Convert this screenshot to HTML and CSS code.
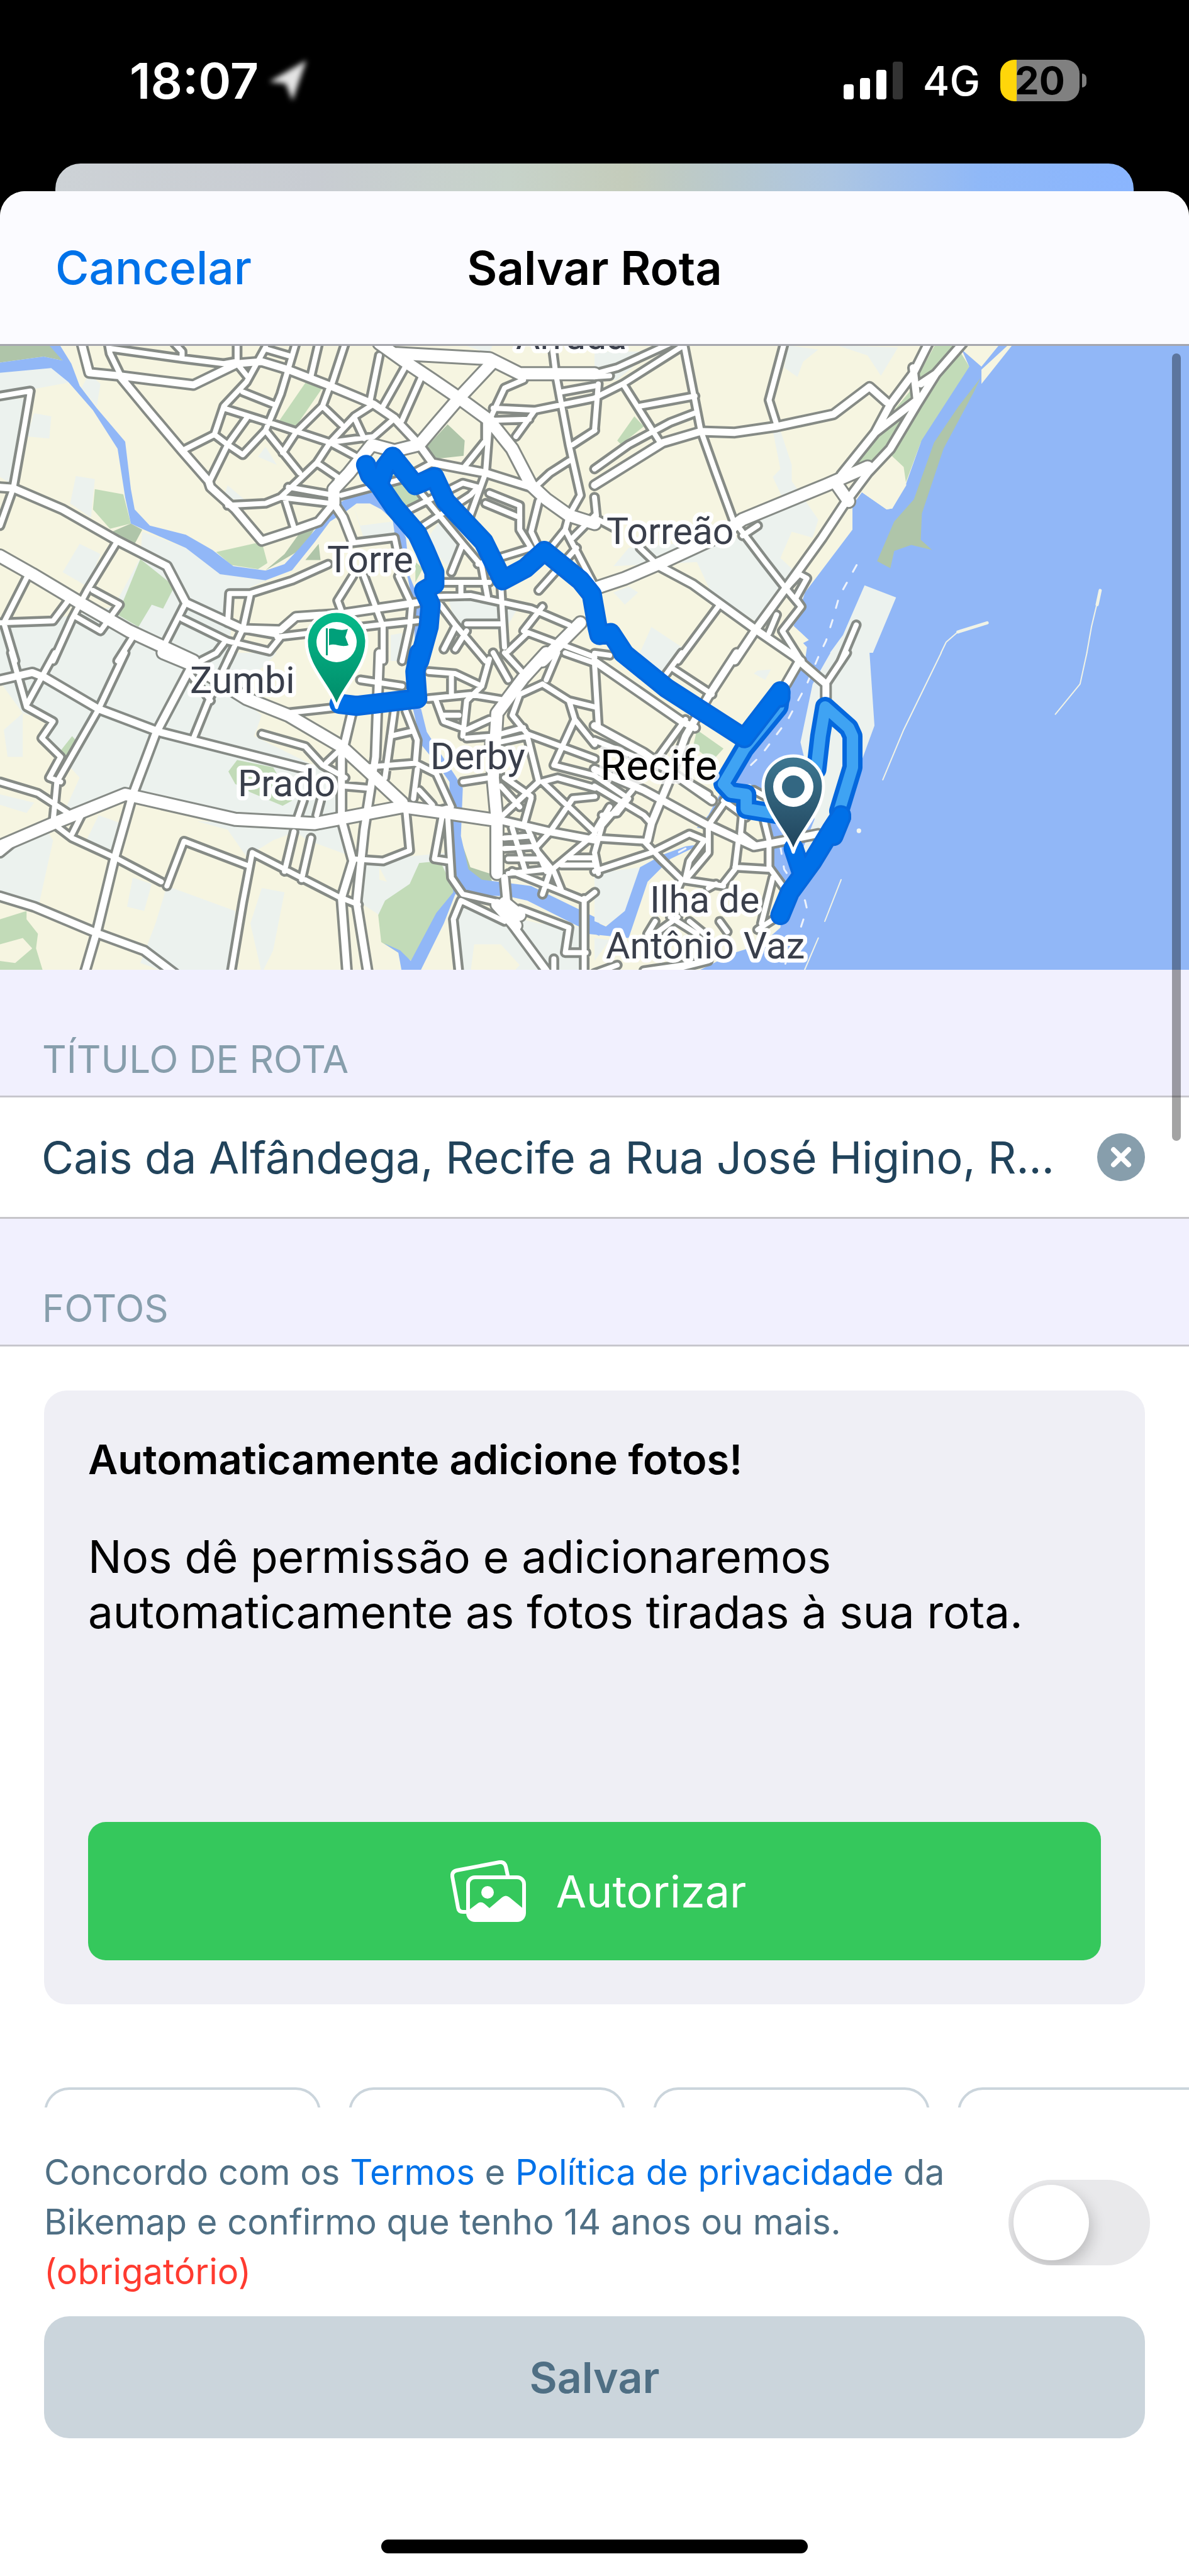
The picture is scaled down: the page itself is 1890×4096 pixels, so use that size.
FILE: index.html
```html
<!DOCTYPE html>
<html lang="pt-BR">
<head>
    <meta charset="UTF-8">
    <meta name="viewport" content="width=device-width, initial-scale=1.0">
    <title>Salvar Rota</title>
    <link rel="stylesheet" href="styles.css">
</head>
<body>
    <div class="status-bar">
        <div class="status-left">
            <span class="clock">18:07</span>
            <svg class="location" viewBox="0 0 66 72" aria-hidden="true"><path d="M62 4 L3 38 L29 41 L40 68 Z"/></svg>
        </div>
        <div class="status-right">
            <svg class="signal" viewBox="0 0 94 60" aria-hidden="true">
                <rect x="0" y="36" width="16" height="24" rx="4"/>
                <rect x="26" y="26" width="16" height="34" rx="4"/>
                <rect x="52" y="13" width="16" height="47" rx="4"/>
                <rect class="off" x="78" y="0" width="16" height="60" rx="4"/>
            </svg>
            <span class="network">4G</span>
            <span class="battery"><span class="battery-level">20</span></span>
        </div>
    </div>
    <div class="behind"></div>

    <div class="sheet">
        <header>
            <button type="button" class="cancel">Cancelar</button>
            <h1>Salvar Rota</h1>
        </header>

        <main>
            <svg class="map" viewBox="0 0 1890 992" role="img" aria-label="Mapa da rota">
                <defs>
                    <linearGradient id="green" x1="0" y1="0" x2="0" y2="1">
                        <stop offset="0" stop-color="#06bb8b"/><stop offset="1" stop-color="#008a68"/>
                    </linearGradient>
                    <linearGradient id="slate" x1="0" y1="0" x2="0" y2="1">
                        <stop offset="0" stop-color="#3e7892"/><stop offset="1" stop-color="#1f425a"/>
                    </linearGradient>

                    <!-- streets, drawn twice: casing first, then the white on top -->
                    <g id="streets">
                        <g transform="translate(0 -4) scale(.603 .322)">
                            <path class="wide" d="M0 1050 L85 1140 L210 1280 L340 1420 L510 1568 M1000 0 L1060 80 L1140 180 L1210 270 L1290 380 L1350 520 L1400 700 L1440 770 L1500 850 L1568 890 M1040 50 L1290 75 L1370 150 L1568 150 M1300 90 L1210 270 L1150 400 L1105 500 L1040 530 L980 500 L920 640 L880 720 L880 790 M1530 1380 L1430 1568"/>
                            <path class="main" d="M0 710 L35 715 L165 820 L310 975 L440 1100 L490 1280 L640 1410 L740 1415 L780 1350 L900 1335 L1100 1280 M215 0 L235 145 L315 160 L400 180 L510 205 L625 100 L690 90 L760 130 L870 210 L985 300 L1040 370 L1105 500 L1140 590 L1280 640 L1400 710 M315 160 L390 330 L480 530 L550 680 L555 710 L620 820 L690 975 L780 920 L840 880 L880 790 L905 860 L930 980"/>
                            <path class="minor" d="M285 0 L290 50 L320 165 M290 25 L480 75 L590 100 L620 90 M460 0 L480 40 L480 70 M780 0 L740 250 L700 430 L790 640 M700 20 L650 190 L590 310 L565 450 L480 530 M625 0 L625 100 L655 170 M705 30 L760 60 M590 320 L700 385 L870 490 L950 570 M640 240 L720 300 M565 450 L600 500 L550 690 M650 370 L600 500 L640 550 L700 430 M850 310 L900 400 M870 210 L850 310 L780 440 L745 540 M840 0 L820 160 M910 0 L875 200 M1000 60 L975 290 M1070 110 L1010 310 M1110 170 L1060 380 M865 490 L985 460 L1040 370 M935 370 L960 470 M985 300 L935 360 L870 490 L835 590 L740 760 L700 790 L600 800 M835 590 L890 660 L880 790 M760 710 L880 750 M740 760 L870 790 M750 760 L775 910 M930 985 L1040 960 L1050 1050 M1140 590 L1060 670 L900 750 M1280 390 L1280 480 L1220 620 M1290 400 L1280 640 L1230 900 M1290 380 L1330 220 L1380 180 M1300 320 L1410 330 L1568 270 M1300 380 L1395 375 M1410 330 L1360 460 M1455 0 L1465 150 L1500 500 L1530 750 L1500 850 M1510 500 L1568 430 M1500 580 L1450 640 L1410 710 M1480 240 L1568 210 M1290 740 L1370 800 L1370 920 L1400 1010 L1260 1090 M1280 790 L1370 860 M1420 780 L1400 930 L1430 1050 M1500 850 L1490 920 L1430 1060 M1490 920 L1568 1200 M1568 850 L1510 960 M1080 820 L1220 690 L1260 710 L1240 750 L1100 920 M1110 740 L1220 990 L1190 1130 M1220 990 L1270 1100 L1285 1250 M1520 1010 L1420 1220 M1160 1180 L1290 1180 M1150 1250 L1240 1245 L1400 1310 L1500 1390 M1215 1180 L1215 1240 M1320 1190 L1330 1500 M1160 1290 L1200 1390 L1280 1568 M1230 1385 L1320 1385 M1200 1400 L1170 1510 M1230 1420 L1200 1510 M1430 1300 L1380 1420 L1480 1490 M1390 1430 L1340 1520 M1470 1480 L1568 1550 M865 1090 L770 1170 L660 1235 L605 1235 L600 1380 M490 1280 L430 1500 M480 1360 L600 1470 L710 1520 M660 1240 L640 1410 L600 1568 M730 1450 L1000 1390 L1100 1370 M740 1450 L710 1520 M640 1410 L730 1440 M590 1480 L570 1530 L530 1568 M960 1150 L1010 1400 L1010 1568 M1050 1150 L1085 1290 L1080 1400 L1060 1568 M930 1150 L890 1270 L900 1320 M310 975 L230 1220 L190 1360 L140 1568 M245 1220 L315 1290 L265 1420 L200 1350 M350 1450 L310 1568 M75 1140 L10 1380 L40 1568 M0 1380 L140 1370 L180 1270 M0 260 L80 235 L65 400 L35 715 L0 900"/>
                        </g>
                        <g transform="translate(945 -4) scale(.603 .322)">
                            <path class="wide" d="M720 610 L610 700 L390 870 L330 950 L180 1080 L80 1160 L0 1210 M640 700 L670 780"/>
                            <path class="main" d="M880 0 L840 150 L780 300 L740 440 L650 650 M970 0 L900 150 L850 300 L780 520 L720 640 L660 790 L600 960 L500 1220 L430 1400 L370 1568 M170 1100 L260 1190 L430 1420 L545 1568 M0 700 L180 490 L280 435 L370 440 L480 410 L630 350 L725 215 L770 290 M840 120 L850 280 L740 440 M860 200 L900 150"/>
                            <path class="minor" d="M235 0 L280 430 L320 640 L365 870 L450 1080 L500 1200 L545 1300 L495 1420 L545 1568 M500 1220 L540 1140 L560 1160 L530 1260 L545 1300 M480 1340 L460 1430 M500 0 L460 280 L480 400 M0 620 L90 500 L200 390 L270 340 M120 310 L265 260 M75 200 L170 480 M0 270 L75 200 L235 10 M0 150 L60 120 L200 0 M0 165 L40 160 M120 1010 L170 1100 M330 1290 L220 1568 M690 1390 L650 1568 M0 860 L50 910 M0 1530 L40 1540 M390 950 L430 900 M0 430 L10 200 M0 760 L5 850"/>
                        </g>
                        <g transform="translate(0 488) scale(.603 .331)">
                            <path class="wide" d="M430 0 L510 60 L650 220 L760 300 L900 450 L960 550 L1060 720 M0 930 L140 820 L330 680 L620 800 L830 820 L1060 740 L1180 770 L1310 805 M1440 0 L1380 120 L1310 290 L1300 600 L1310 800 L1310 1060 M1310 1210 L1360 1310 M1330 1200 L1370 1260"/>
                            <path class="main" d="M500 80 L410 390 L350 680 L300 1000 L255 1340 L225 1527 M0 130 L85 95 L120 120 L260 270 L420 380 L810 560 M0 1170 L90 1220 L260 1350 L380 1430 L460 1540 M930 270 L900 500 L900 800 L930 1000 L900 1180 L915 1540 M1000 0 L990 500 L960 850 L940 1200 L970 1540 M0 960 L40 900 M1310 800 L1450 860 L1568 900 M1330 1080 L1340 1280 L1440 1527"/>
                            <path class="minor" d="M30 0 L70 260 L140 330 L110 410 L160 500 L130 600 L160 620 M145 0 L70 250 M330 0 L260 270 L150 620 L140 810 M610 0 L550 230 L510 410 M500 100 L555 230 M0 620 L100 675 L180 770 M215 780 L190 870 M140 820 L190 890 L310 990 L425 1100 M440 1120 L485 905 L650 1020 M665 960 L890 1170 L945 1210 M665 960 L640 1200 L610 1527 M775 860 L750 1050 M820 890 L795 1090 M690 390 L805 450 L850 540 L910 600 M800 710 L785 790 M845 710 L835 780 M750 290 L900 260 M860 530 L900 460 M1040 270 L1015 600 M1070 280 L1100 420 L1095 530 L960 550 M1095 530 L1150 580 L1190 740 L1150 760 M1030 400 L1090 375 M950 130 L1060 160 M905 640 L970 650 M1100 560 L1090 700 M1105 660 L1140 730 M1070 760 L1080 950 L1010 1000 L930 990 M1165 790 L1145 990 L1180 1000 M1180 780 L1190 1080 L1220 1160 L1340 1210 M1130 90 L1200 100 L1270 160 L1230 230 L1220 400 M1190 110 L1190 200 M1130 220 L1240 200 L1340 230 M1270 160 L1290 30 M1300 0 L1340 130 M1330 0 L1380 100 M1430 150 L1370 200 L1350 300 L1390 390 L1568 510 M1430 150 L1500 230 L1568 260 M1490 0 L1568 50 M1440 130 L1470 0 M1150 230 L1170 330 L1230 370 L1290 320 M1170 300 L1210 300 M1230 410 L1300 400 L1380 360 M1290 440 L1390 400 M1500 230 L1515 320 L1460 540 L1568 590 M1515 320 L1568 440 M1390 400 L1420 620 L1320 790 M1430 620 L1568 860 M1430 620 L1470 600 L1568 650 M1568 690 L1510 700 L1450 860 M1400 700 L1380 830 M1320 640 L1370 740 M1330 600 L1400 690 M1330 890 L1400 880 M1330 940 L1410 930 M1340 990 L1430 990 M1350 840 L1385 1050 M1390 840 L1440 1050 M1340 1060 L1440 1040 M1450 860 L1410 940 L1460 1050 L1480 1140 M1568 870 L1450 1050 L1430 1160 M1220 620 L1290 600 M1500 985 L1568 985 M1480 1020 L1568 1020 M1210 1540 L1195 1280 L1215 1190 L1330 1290 M1370 1230 L1500 1320 L1490 1440 L1545 1440 M1540 1180 L1540 1527 M1350 1050 L1540 1190 L1568 1150 M1460 1470 L1460 1540"/>
                        </g>
                        <g transform="translate(945 488) scale(.603 .331)">
                            <path class="main" d="M0 40 L230 330 L265 360 M0 560 L130 660 L300 830 L420 930 L480 910 L590 870 M375 0 L300 210 L240 400 L200 600 L150 820 L140 900 M540 40 L610 150 L610 220 M520 0 L540 40 L505 150 M0 350 L130 480 L310 710"/>
                            <path class="minor" d="M240 320 L160 520 M230 0 L190 100 M210 80 L310 200 M665 0 L610 150 M0 640 L130 780 L150 820 M0 50 L10 350 M0 420 L190 560 L300 680 M100 660 L20 830 L0 960 L10 1050 M0 590 L90 700 L60 770 M350 700 L300 830 L300 960 L240 1090 M390 770 L385 870 L430 930 M340 710 L400 790 M445 790 L460 900 L460 1030 L500 1130 M310 830 L380 890 L370 1040 L340 1110 M370 1030 L460 1040 M470 1080 L440 1300 M0 890 L130 905 L180 1000 L230 1090 L340 1120 M0 1050 L150 960 L250 870 L290 900 L250 1000 L240 1080 M20 780 L60 770 M40 740 L0 860 M230 1090 L220 1130 M320 1110 L300 1130 M160 1290 L140 1350 M220 1270 L160 1350 M250 1290 L290 1350 M200 1270 L270 1350 M0 1540 L60 1500 M130 1527 L270 1490 M350 1340 L330 1290 M170 1540 L300 1480 M0 1000 L10 1060 M480 1270 L430 1330 M420 660 L450 690"/>
                        </g>
                    </g>

                    <g id="route-main">
                        <g transform="translate(0 -4) scale(.603 .322)">
                            <path d="M965 600 L975 650 L1000 700 L1040 810 L1100 940 L1120 1020 L1145 1130 L1145 1190 L1118 1220 L1135 1290 L1130 1400 L1105 1568 M1000 690 L1015 610 L1035 560 L1095 700 L1145 660 L1175 780 L1275 980 L1325 1170 L1385 1110 L1435 1025 L1530 1170 L1560 1240 L1575 1400 L1580 1440 L1610 1430 L1645 1530"/>
                        </g>
                        <g transform="translate(0 488) scale(.603 .331)">
                            <path d="M1105 0 L1095 90 L1100 220 L940 255 L895 245"/>
                        </g>
                        <g transform="translate(945 488) scale(.603 .331)">
                            <path d="M75 0 L190 170 L395 410 L490 185 L490 215 M650 790 L630 880 M650 780 L625 850 L575 1000 L515 1150 L490 1260 M525 940 L545 1050"/>
                        </g>
                    </g>
                    <g id="route-light" transform="translate(945 488) scale(.603 .331)">
                        <path d="M490 190 L485 260 L395 460 L340 630 L360 670 L400 680 L400 750 L500 780 M585 560 L595 400 L608 260 L670 360 L680 400 L680 550 L645 760 L650 790"/>
                    </g>
                </defs>

                <rect class="land" width="1890" height="992"/>

                <!-- upper left -->
                <g transform="translate(0 -4) scale(.603 .322)">
                    <path class="built" d="M0 145 L135 122 L190 190 L90 225 L0 250 Z M0 280 L65 270 L35 700 L0 660 Z M235 150 L265 200 L255 310 L215 220 Z M90 345 L135 360 L130 470 L70 460 Z M200 655 L250 670 L240 860 L185 790 Z M210 990 L265 1040 L230 1200 L165 1130 Z M375 930 L490 1010 L580 1140 L700 1170 L620 1240 L600 1568 L0 1568 L0 1390 L140 1360 L300 1300 L370 1060 Z M700 510 L730 600 L680 560 Z M600 700 L650 780 L590 760 Z M930 790 L950 900 L1035 880 L1040 950 L960 970 Z M1170 850 L1230 1000 L1200 1140 L1120 980 Z M1180 1250 L1370 1290 L1330 1420 L1200 1380 Z M1210 0 L1300 0 L1290 50 Z M1030 1440 L1060 1430 L1050 1568 L1030 1568 Z"/>
                    <path class="park" d="M805 195 L850 220 L780 410 L735 385 Z M250 720 L325 745 L345 890 L290 915 L245 820 Z M570 1030 L690 980 L705 1085 L680 1115 L610 1095 Z M370 1065 L460 1200 L430 1310 L400 1290 L365 1400 L310 1340 Z M1040 640 L1110 770 L1070 810 L1025 680 Z M1095 1080 L1115 1110 L1095 1180 Z"/>
                    <path class="forest" d="M0 0 L130 0 L165 85 L115 65 L0 95 Z M1180 400 L1225 480 L1222 555 L1150 570 L1125 510 Z M295 930 L345 890 L375 920 L355 990 Z M840 880 L800 1010 L700 1120 L750 1040 L800 910 Z M840 990 L845 1070 L805 1070 Z"/>
                    <path class="water" d="M0 95 L115 65 L165 85 L125 0 L155 0 L188 100 L210 210 L255 320 L330 485 L345 720 L355 820 L395 900 L490 945 L560 1020 L615 1100 L700 1122 L750 1090 L790 1010 L840 900 L880 800 L945 740 L1000 735 L1045 860 L1070 960 L1080 1150 L1110 1290 L1115 1568 L1095 1568 L1090 1290 L1075 1160 L1045 1000 L1035 870 L1005 820 L975 790 L940 790 L915 825 L870 880 L830 980 L770 1120 L700 1170 L580 1140 L490 1010 L380 920 L345 890 L330 760 L310 520 L245 330 L180 190 L135 122 L0 145 Z"/>
                </g>

                <!-- upper right, coast -->
                <g transform="translate(945 -4) scale(.603 .322)">
                    <path class="built" d="M510 10 L590 30 L550 90 L535 165 L500 120 Z M640 10 L800 20 L755 160 L720 60 Z M0 40 L150 40 L60 180 L0 180 Z M470 430 L490 430 L520 600 L520 680 L590 870 L575 960 L520 930 L490 1060 L530 1130 L430 1380 L310 1240 L270 1080 L50 1100 L90 1010 L380 960 L500 780 L470 660 L490 620 Z M50 1230 L90 1200 L115 1230 L80 1290 Z M150 1400 L230 1500 L210 1568 L110 1568 Z"/>
                    <path class="park" d="M900 0 L950 0 L990 120 L860 490 L820 690 L780 540 L700 600 L680 600 L740 440 L830 240 Z M105 360 L130 410 L70 500 L60 480 Z"/>
                    <path class="water" d="M1070 0 L1568 0 L1568 1568 L555 1568 L560 1500 L550 1480 L565 1465 L525 1395 L555 1230 L680 920 L680 800 L705 735 L770 820 L785 815 L822 690 L862 480 L988 115 L968 30 L1020 115 Z"/>
                    <path class="land" d="M1095 0 L1105 0 L1020 200 L1020 130 Z M770 820 L785 815 L822 700 L815 610 L775 540 L705 735 Z"/>
                    <path class="forest" d="M1018 170 L1000 240 L920 520 L863 840 L860 970 L890 1020 L835 995 L790 1025 L780 1110 L745 1075 L790 880 L842 770 L895 490 L960 310 Z"/>
                    <path class="built" d="M712 1195 L795 1255 L725 1568 L605 1568 L655 1440 Z"/>
                    <path class="pier thin" d="M958 1425 L927 1475 L900 1580 M1333 1220 L1310 1400 L1293 1580"/>
                    <path class="pier" d="M1035 1380 L958 1425 M1333 1220 L1325 1290"/>
                    <path class="ferry" d="M691 1095 L645 1250 L627 1370 L610 1470 L585 1568"/>
                </g>

                <!-- lower left -->
                <g transform="translate(0 488) scale(.603 .331)">
                    <path class="built" d="M0 0 L730 0 L620 200 L690 300 L670 400 L870 580 L890 700 L890 780 L620 790 L330 680 L170 760 L210 600 L160 500 L110 400 L130 330 L60 290 L0 140 Z M60 290 L60 500 L20 500 L10 370 Z M260 780 L320 820 L290 980 L220 930 Z M0 680 L90 720 L70 770 L0 730 Z M120 840 L140 900 L100 1230 L0 1160 L0 950 Z M520 810 L890 830 L930 980 L810 900 L780 860 L720 900 L650 980 L600 850 Z M440 1120 L620 1240 L610 1540 L450 1540 L370 1490 L410 1300 Z M690 1130 L750 1150 L720 1430 L690 1540 L660 1300 Z M350 1080 L400 1110 L380 1240 L335 1220 Z M960 1000 L1180 960 L1190 1100 L1000 1260 L950 1200 Z M1200 1200 L1420 1300 L1540 1320 L1540 1540 L1200 1540 Z"/>
                    <path class="land" d="M1250 1400 L1320 1400 L1370 1500 L1350 1540 L1240 1540 Z M1000 1030 L1020 1100 L1000 1090 Z"/>
                    <path class="park" d="M190 400 L200 420 L170 510 L160 470 Z M625 515 L720 550 L770 710 L745 735 L660 670 L620 630 L602 570 Z M0 1280 L70 1240 L70 1280 L100 1350 L95 1420 L115 1540 L0 1540 Z M1105 1010 L1160 1000 L1200 1150 L1085 1480 L1005 1390 L997 1260 L1015 1190 L1080 1110 Z"/>
                    <path class="forest" d="M1215 900 L1240 1030 L1290 1060 L1300 1115 L1240 1090 Z"/>
                    <path class="land" d="M0 1400 L60 1370 L85 1420 L40 1490 L0 1480 Z"/>
                    <path class="water" d="M1085 240 L1110 270 L1125 380 L1160 480 L1200 590 L1220 650 L1215 880 L1235 1040 L1270 1090 L1400 1120 L1580 1280 L1580 1360 L1520 1310 L1390 1190 L1340 1170 L1200 1160 L1170 1300 L1105 1540 L1060 1540 L1050 1440 L1012 1395 L1055 1430 L1083 1480 L1150 1250 L1195 1150 L1185 1000 L1185 620 L1150 530 L1110 440 Z"/>
                </g>

                <!-- lower right -->
                <g transform="translate(945 488) scale(.603 .331)">
                    <path class="built" d="M75 0 L215 0 L190 150 L120 70 Z M430 85 L465 80 L450 130 L420 100 Z M0 1060 L120 1030 L80 1250 L30 1310 L0 1290 Z M0 1370 L40 1380 L0 1480 Z"/>
                    <path class="park" d="M270 370 L340 460 L310 520 L260 450 Z"/>
                    <path class="water" d="M560 0 L550 60 L500 200 L390 450 L330 650 L372 640 L410 630 L450 700 L460 900 L470 1030 L500 1130 L490 1320 L440 1400 L370 1440 L260 1540 L1568 1540 L1568 0 Z M330 680 L300 780 L270 840 L300 850 L340 720 Z M240 930 L180 970 L120 1030 L80 1240 L30 1315 L0 1290 L-20 1280 L-20 1350 L90 1370 L140 1100 L200 990 L280 920 Z"/>
                    <path class="built" d="M622 0 L575 150 L543 430 L560 560 L580 800 L545 960 L560 1000 L620 820 L680 640 L738 350 L725 0 Z"/>
                    <path class="pier thin" d="M914 0 L815 370 L760 610 M1298 0 L1280 150 L1215 295 M650 1090 L607 1290 M590 1370 L553 1527"/>
                    <path class="ferry" d="M590 20 L560 150 L510 320 L440 490 L395 570 M490 930 L500 1040 L555 1190 L560 1230 L540 1340 L495 1527 M330 700 L310 790 M240 940 L200 980"/>
                    <ellipse class="speck" cx="697" cy="855" rx="6" ry="11"/>
                </g>

                <use href="#streets" class="casing"/>
                <use href="#streets" class="surface"/>

                <use href="#route-light" class="route-edge"/>
                <use href="#route-light" class="route-glow"/>
                <use href="#route-main" class="route-edge"/>
                <use href="#route-main" class="route-fill"/>

                <g class="labels">
                    <text x="820" y="5">Arruda</text>
                    <text x="520" y="360">Torre</text>
                    <text x="964" y="315">Torreão</text>
                    <text x="302" y="552">Zumbi</text>
                    <text x="378" y="716">Prado</text>
                    <text x="684" y="673">Derby</text>
                    <text x="1033" y="901">Ilha de</text>
                    <text x="963" y="974">Antônio Vaz</text>
                    <text class="city" x="954" y="690">Recife</text>
                </g>

                <g transform="translate(535 577)">
                    <path class="pin" fill="url(#green)" d="M0 -2 C-10 -36 -48 -66 -48 -107 A48 48 0 0 1 48 -107 C48 -66 10 -36 0 -2 Z"/>
                    <circle class="pin-hole" cy="-106" r="32"/>
                    <path fill="#00a07a" d="M-17 -128 h3 v43 h-3 Z M-12 -127 C-4 -130 4 -122 18 -127 L14 -114 L19 -101 C6 -97 -2 -105 -12 -101 Z"/>
                </g>
                <g transform="translate(1261 807)">
                    <path class="pin" fill="url(#slate)" d="M0 -2 C-10 -36 -48 -66 -48 -107 A48 48 0 0 1 48 -107 C48 -66 10 -36 0 -2 Z"/>
                    <circle class="pin-hole" cy="-106" r="32"/>
                    <circle fill="#336782" cy="-106" r="18"/>
                </g>
            </svg>

            <h2><label for="route-title">TÍTULO DE ROTA</label></h2>
            <div class="title-row">
                <input id="route-title" type="text" value="Cais da Alfândega, Recife a Rua José Higino, R...">
                <button type="button" class="clear" aria-label="Limpar">
                    <svg viewBox="0 0 76 76"><path d="M26 26 L50 50 M50 26 L26 50"/></svg>
                </button>
            </div>

            <h2>FOTOS</h2>
            <section class="photos">
                <div class="card">
                    <h3>Automaticamente adicione fotos!</h3>
                    <p>Nos dê permissão e adicionaremos automaticamente as fotos tiradas à sua rota.</p>
                    <button type="button" class="authorize">
                        <svg viewBox="0 0 120 98" aria-hidden="true">
                            <path class="line" d="M24 82 H20 Q13 82 12 75 L3 26 Q2 18 10 16 L78 3 Q86 2 88 10 L91 24"/>
                            <rect class="line" x="28" y="27" width="89" height="68" rx="11"/>
                            <circle cx="59" cy="51" r="10"/>
                            <path d="M28 80 L44 68 Q49 65 54 69 L62 76 L82 59 Q88 54 94 59 L117 78 V86 Q117 95 107 95 H38 Q28 95 28 86 Z"/>
                        </svg>
                        <span>Autorizar</span>
                    </button>
                </div>
                <div class="slots">
                    <div class="slot"></div>
                    <div class="slot"></div>
                    <div class="slot"></div>
                    <div class="slot"></div>
                </div>
            </section>
            <div class="scrollbar"></div>
        </main>

        <footer>
            <div class="consent">
                <label for="agree">Concordo com os <a href="#">Termos</a> e <a href="#">Política de privacidade</a> da Bikemap e confirmo que tenho 14 anos ou mais. <span class="required">(obrigatório)</span></label>
                <input id="agree" type="checkbox" role="switch">
            </div>
            <button type="button" class="save">Salvar</button>
            <div class="home-bar"></div>
        </footer>
    </div>
</body>
</html>
```
FILE: styles.css
```css
* { box-sizing: border-box; }
body { margin: 0; min-height: 100vh; display: flex; flex-direction: column; background: #000; font-family: Inter, "Liberation Sans", sans-serif; }
button, input { font-family: inherit; border: 0; margin: 0; padding: 0; }
h1, h2, h3, p { margin: 0; }

/* status bar */
.status-bar { height: 260px; padding: 0 174px 4px 206px; display: flex; align-items: center; justify-content: space-between; color: #fff; }
.status-left, .status-right { display: flex; align-items: center; }
.status-left { gap: 14px; }
.clock { font-size: 79px; font-weight: 600; }
.location { width: 66px; fill: #e4e4e4; filter: blur(4px); }
.signal { width: 94px; fill: #fff; }
.signal .off { fill: #333; }
.network { margin: 0 32px; font-size: 65px; font-weight: 500; }
.battery { position: relative; width: 126px; height: 66px; border-radius: 22px; background: linear-gradient(90deg, #ffd60a 26px, #808080 26px); }
.battery::after { content: ""; position: absolute; left: 130px; top: 22px; width: 7px; height: 22px; border-radius: 0 8px 8px 0; background: #808080; }
.battery-level { display: block; line-height: 66px; text-align: center; color: #000; font-size: 61px; font-weight: 700; }

.behind { height: 44px; margin: 0 88px; border-radius: 40px 40px 0 0; background: linear-gradient(90deg, #cdd2d6, #c8ccd2 24%, #c7d3ca 42%, #c4ccbb 53%, #adc6e2 72%, #8fb8f8 86%, #8ab5fe); }

/* sheet */
.sheet { flex: 1; display: flex; flex-direction: column; background: #fff; border-radius: 40px 40px 0 0; overflow: hidden; }
header { height: 246px; padding: 0 88px; display: grid; grid-template-columns: 1fr auto 1fr; align-items: center; background: #fbfbff; border-bottom: 3px solid #a5a6ad; }
.cancel { justify-self: start; background: none; color: #0072e9; font-size: 73px; font-weight: 500; }
h1 { font-size: 74px; font-weight: 600; }

main { position: relative; }
.scrollbar { position: absolute; top: 12px; right: 13px; width: 14px; height: 1252px; border-radius: 7px; background: rgba(0, 0, 0, .36); }

/* map */
.map { display: block; width: 100%; }
.map path { stroke-linecap: round; stroke-linejoin: round; vector-effect: non-scaling-stroke; }
.land { fill: #f6f5e1; }
.built { fill: #ecf2ee; }
.park { fill: #c2dbb8; }
.forest { fill: #afc5a9; }
.water { fill: #91b7f7; }
.speck { fill: #f4f6ef; }
.pier { fill: none; stroke: #f1f3e6; stroke-width: 5px; }
.pier.thin { stroke-width: 2px; }
.ferry { fill: none; stroke: #eef3fb; stroke-width: 3px; stroke-dasharray: 12 20; }
.casing { fill: none; stroke: #868b86; --wide: 24px; --main: 19px; --minor: 17px; }
.surface { fill: none; stroke: #fff; --wide: 18px; --main: 11px; --minor: 8px; }
.wide { stroke-width: var(--wide); }
.main { stroke-width: var(--main); }
.minor { stroke-width: var(--minor); }
.route-edge, .route-fill, .route-glow { fill: none; }
.route-edge { stroke: #0568dd; stroke-width: 32px; }
.route-fill { stroke: #0070e8; stroke-width: 24px; }
.route-glow { stroke: #3fa3f3; stroke-width: 18px; }
.labels { font-family: Roboto, sans-serif; font-size: 59px; fill: #3a3f4b; stroke: #fff; stroke-width: 13px; stroke-linejoin: round; paint-order: stroke; }
.city { font-size: 67px; fill: #000; stroke: rgba(255, 255, 255, .8); }
.pin { stroke: #fff; stroke-width: 5px; }
.pin-hole { fill: #fff; }

/* form */
h2 { height: 203px; padding: 0 67px 20px; display: flex; align-items: flex-end; background: #f1f0fe; border-bottom: 3px solid #c8c7ce; color: #879eac; font-size: 60px; font-weight: 400; line-height: 76px; }
.title-row { display: flex; align-items: center; height: 193px; padding: 0 70px 0 66px; border-bottom: 3px solid #c6c5ca; }
.title-row input { flex: 1; min-width: 0; height: 100px; background: none; color: #21435b; font-size: 70px; text-overflow: ellipsis; outline: 0; }
.clear { width: 76px; height: 76px; border-radius: 50%; background: #879eac; }
.clear svg { display: block; fill: none; stroke: #fff; stroke-width: 8px; stroke-linecap: round; }

.photos { padding: 70px 0 0 70px; }
.card { height: 976px; margin-right: 70px; padding: 70px; border-radius: 36px; background: #efeff5; display: flex; flex-direction: column; }
h3 { font-size: 65px; font-weight: 600; line-height: 80px; }
.card p { margin-top: 70px; font-size: 71px; line-height: 88px; }
.authorize { margin-top: auto; height: 220px; padding-left: 12px; border-radius: 28px; background: #35c85c; color: #fff; font-size: 70px; display: flex; align-items: center; justify-content: center; gap: 48px; }
.authorize svg { width: 120px; fill: #fff; }
.authorize .line { fill: none; stroke: #fff; stroke-width: 6px; stroke-linecap: round; }
.slots { display: flex; gap: 44px; height: 32px; margin-top: 132px; overflow: hidden; }
.slot { flex: 0 0 440px; height: 320px; border: 4px solid #cbd5dc; border-radius: 40px; }

/* footer */
footer { flex: 1; display: flex; flex-direction: column; padding: 64px 70px 36px; }
.consent { display: flex; align-items: center; justify-content: space-between; color: #4f6f84; font-size: 56px; line-height: 79px; margin-right: -8px; }
.consent label { width: 1460px; }
.consent a { color: #0072e9; text-decoration: none; }
.required { color: #ff3b30; }
#agree { appearance: none; width: 225px; height: 136px; border-radius: 68px; background: #e9e9eb; padding: 8px; overflow: hidden; }
#agree::before { content: ""; display: block; width: 120px; height: 120px; border-radius: 50%; background: #fff; box-shadow: 4px 10px 24px rgba(0, 0, 0, .2); }
#agree:checked { background: #35c85c; }
#agree:checked::before { margin-left: auto; }
.save { height: 194px; margin-top: 31px; border-radius: 40px; background: #cbd5dc; color: #4f6f84; font-size: 68px; font-weight: 600; }
.home-bar { width: 678px; height: 22px; margin: auto auto 0; border-radius: 11px; background: #000; }
```
